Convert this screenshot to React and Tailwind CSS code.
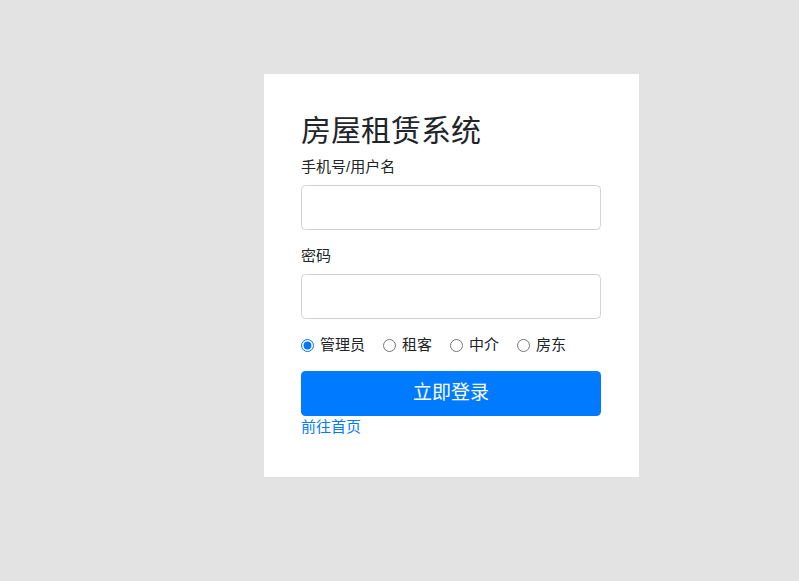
import React, { useState } from "react";

export default function App() {
  const [role, setRole] = useState("admin");
  const roles = [
    { v: "admin", t: "管理员" },
    { v: "tenant", t: "租客" },
    { v: "agent", t: "中介" },
    { v: "landlord", t: "房东" },
  ];
  return (
    <div
      className="min-h-[581px] w-full bg-[#e3e3e3] pt-[74px] pl-[264px] text-[#212529]"
      style={{ fontFamily: '"Liberation Sans", "Noto Sans CJK SC", sans-serif' }}
    >
      <div className="w-[375px] bg-white pl-[37px] pr-[38px] pt-[39px] pb-[38.5px]">
        <h2 className="text-[30px] leading-[36px] font-normal mb-[6.5px]">房屋租赁系统</h2>
        <div className="mb-[14.5px]">
          <label className="block text-[15px] leading-[22.5px] mb-[7px]">手机号/用户名</label>
          <input
            type="text"
            className="block w-full h-[45px] border border-[#ced4da] rounded-[4.5px] px-4 text-[19px] outline-none"
          />
        </div>
        <div className="mb-[15px]">
          <label className="block text-[15px] leading-[22.5px] mb-[7px]">密码</label>
          <input
            type="password"
            className="block w-full h-[45px] border border-[#ced4da] rounded-[4.5px] px-4 text-[19px] outline-none"
          />
        </div>
        <div className="flex items-center h-[22.5px] mb-[14.5px] text-[15px]">
          {roles.map((r, i) => (
            <label key={r.v} className={`flex items-center ${i > 0 ? "ml-[18px]" : ""}`}>
              <input
                type="radio"
                name="role"
                checked={role === r.v}
                onChange={() => setRole(r.v)}
                className="m-0 w-[13px] h-[13px]"
              />
              <span className="ml-[6px] leading-[22.5px]">{r.t}</span>
            </label>
          ))}
        </div>
        <button className="block w-full h-[45px] bg-[#007bff] text-white text-[19px] rounded-[4.5px]">
          立即登录
        </button>
        <a href="#" className="block text-[15px] leading-[22.5px] text-[#007bff]">
          前往首页
        </a>
      </div>
    </div>
  );
}
